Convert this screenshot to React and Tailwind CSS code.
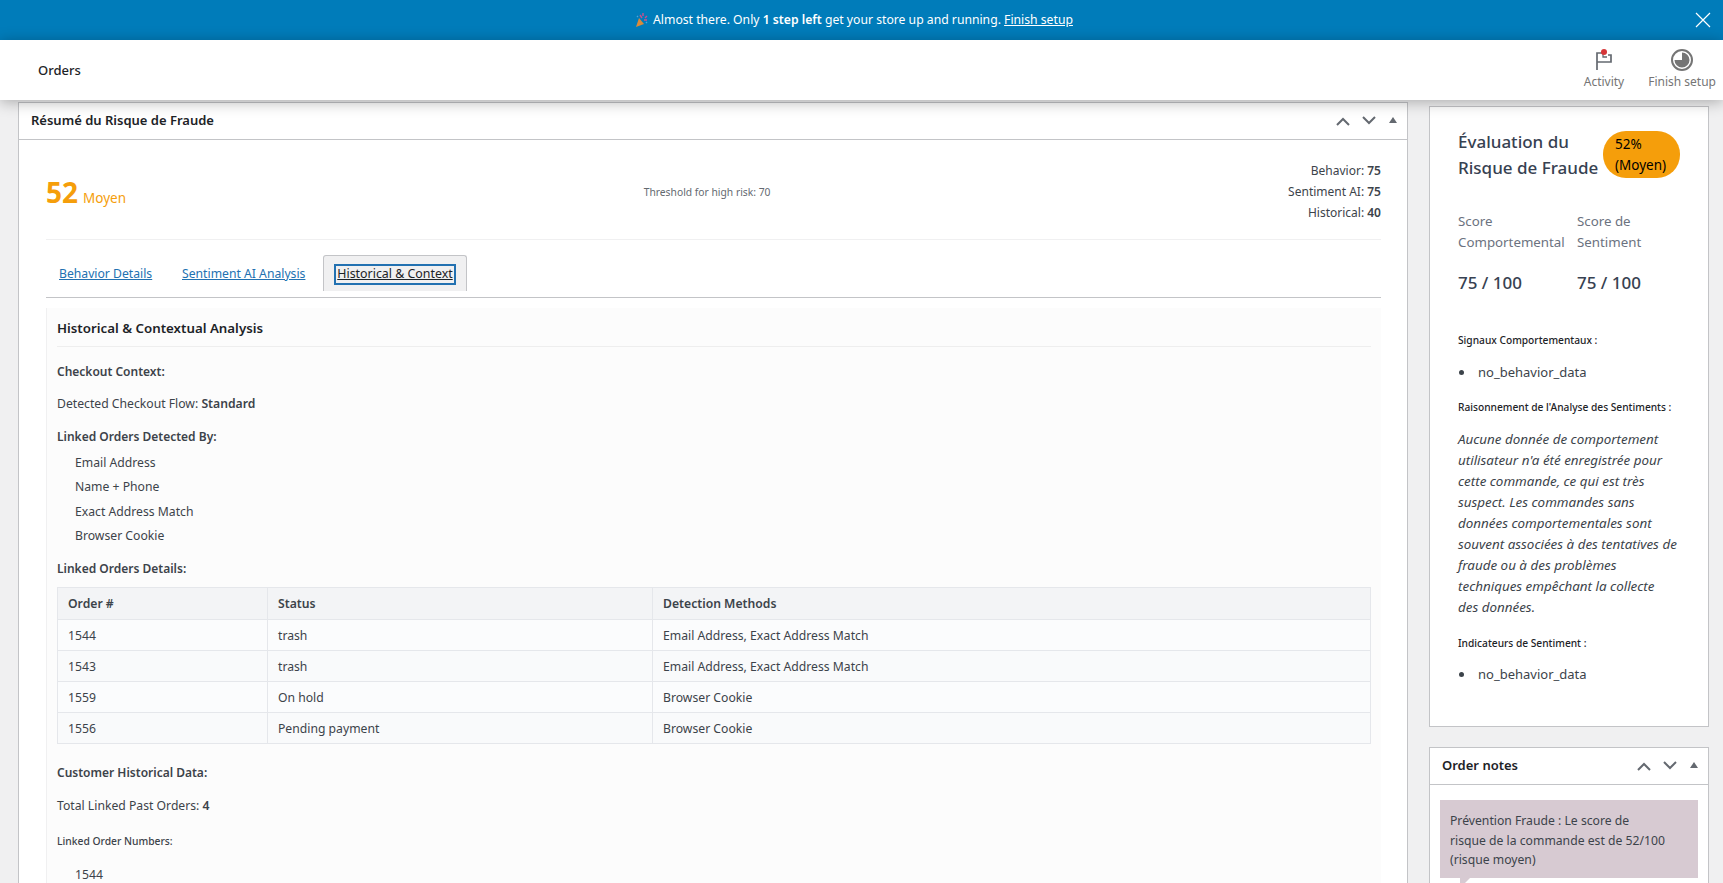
const linkedOrders = [
  ['1544', 'trash', 'Email Address, Exact Address Match', 'bg-[#fbfcfd]'],
  ['1543', 'trash', 'Email Address, Exact Address Match', 'bg-[#f9fafb]'],
  ['1559', 'On hold', 'Browser Cookie', 'bg-[#fbfcfd]'],
  ['1556', 'Pending payment', 'Browser Cookie', 'bg-[#f9fafb]'],
]

const reasoning = [
  'Aucune donnée de comportement',
  "utilisateur n'a été enregistrée pour",
  'cette commande, ce qui est très',
  'suspect. Les commandes sans',
  'données comportementales sont',
  'souvent associées à des tentatives de',
  'fraude ou à des problèmes',
  'techniques empêchant la collecte',
  'des données.',
]

function BoxControls() {
  return (
    <div className="flex items-center gap-[10px] text-[#646970]">
      <svg width="16" height="10" viewBox="0 0 16 10" fill="none" stroke="currentColor" strokeWidth="2">
        <path d="M2 9l6-6 6 6" />
      </svg>
      <svg width="16" height="10" viewBox="0 0 16 10" fill="none" stroke="currentColor" strokeWidth="2">
        <path d="M2 1l6 6 6-6" />
      </svg>
      <svg width="8" height="6" viewBox="0 0 8 6" fill="currentColor" className="ml-[2px] mb-[3px]">
        <path d="M4 0l4 6H0z" />
      </svg>
    </div>
  )
}

function BehaviorList({ children }) {
  return (
    <div className="flex items-center text-[13px] leading-[21px]">
      <span className="w-[5px] h-[5px] rounded-full bg-[#3c434a] mr-[14px] ml-px" />
      {children}
    </div>
  )
}

export default function App() {
  return (
    <div className="h-screen overflow-hidden flex flex-col bg-[#f0f0f1] text-[#3c434a] text-[12.2px] font-['Noto_Sans',sans-serif]">
      <div className="h-10 shrink-0 bg-[#007cba] text-white flex items-center justify-center relative pr-[16px]">
        <svg width="14" height="16" viewBox="0 0 14 16" className="mr-[5px]">
          <path d="M2 15l3-9 5 6z" fill="#d98a3a" />
          <path d="M6 3l2 3M9 1v3M11 6l2-2M10 8h3" stroke="#c9508e" strokeWidth="1.4" fill="none" />
          <path d="M3 4l1 1M12 10l1 1" stroke="#4aa3df" strokeWidth="1.4" />
        </svg>
        <span>
          Almost there. Only <b className="font-semibold">1 step left</b> get your store up and running.{' '}
          <a className="underline">Finish setup</a>
        </span>
        <svg width="16" height="16" viewBox="0 0 16 16" fill="none" stroke="white" strokeWidth="1.2" className="absolute right-[12px] top-[12px]">
          <path d="M1 1l14 14M15 1L1 15" />
        </svg>
      </div>

      <div className="h-[60px] shrink-0 bg-white relative z-10 shadow-[0_2px_14px_rgba(0,0,0,0.3)] flex items-center justify-between pl-[38px] pr-[7px]">
        <span className="text-[#1d2327] font-medium text-[13px] pt-[2px]">Orders</span>
        <div className="flex items-start gap-[24px] text-[#757575] text-[12px]">
          <div className="flex flex-col items-center">
            <svg width="20" height="22" viewBox="0 0 20 22" fill="none" className="mb-[2px]">
              <path d="M3 21V4h6M3 13h14V6h-3" stroke="#646970" strokeWidth="1.7" />
              <path d="M9 4v4h4" stroke="#646970" strokeWidth="1.3" />
              <circle cx="10" cy="3" r="3" fill="#d63638" />
            </svg>
            <span>Activity</span>
          </div>
          <div className="flex flex-col items-center">
            <svg width="22" height="22" viewBox="0 0 22 22" className="mb-[2px]">
              <circle cx="11" cy="11" r="10" fill="none" stroke="#757575" strokeWidth="2" />
              <path d="M11 3.500a7.500 7.500 0 1 1-7.500 7.500H11z" fill="#757575" />
            </svg>
            <span>Finish setup</span>
          </div>
        </div>
      </div>

      <div className="flex items-start pl-[18px] pr-[14px]">
        <div className="w-[1390px] mt-[2px] shrink-0 border border-[#c3c4c7] bg-white">
          <div className="h-[37px] border-b border-[#c3c4c7] flex items-center justify-between pl-3 pr-[10px]">
            <h2 className="text-[13px] font-semibold text-[#1d2327]">Résumé du Risque de Fraude</h2>
            <BoxControls />
          </div>
          <div className="px-[27px] pr-[26px]">
            <div className="pt-[20px] pb-[16px] border-b border-[#f0f0f1] flex items-center justify-between">
              <div className="text-[#f59e0b] flex items-baseline gap-[5px]">
                <span className="text-[28px] leading-[36px] font-bold">52</span>
                <span className="text-[13.5px]">Moyen</span>
              </div>
              <span className="text-[10.3px] text-[#646970] pt-[2px]">Threshold for high risk: 70</span>
              <div className="text-right leading-[21px] text-[12px]">
                <div>Behavior: <b className="font-semibold">75</b></div>
                <div>Sentiment AI: <b className="font-semibold">75</b></div>
                <div>Historical: <b className="font-semibold">40</b></div>
              </div>
            </div>

            <div className="pt-[15px] pb-[6px] border-b border-[#c3c4c7] flex items-end text-[#2271b1]">
              <a className="h-9 w-[117px] pl-[13px] pt-[2px] flex items-center underline">Behavior Details</a>
              <a className="h-9 w-[160px] pl-[19px] pt-[2px] flex items-center underline">Sentiment AI Analysis</a>
              <div className="h-9 w-[144px] border border-b-0 border-[#c3c4c7] rounded-t-[3px] bg-[#f0f0f1] flex items-center justify-center pt-[2px]">
                <a className="h-[17px] w-[118px] flex items-center justify-center whitespace-nowrap text-[12.4px] text-[#1d2327] underline outline-2 outline-[#2271b1]">Historical &amp; Context</a>
              </div>
            </div>

            <div className="mt-[10px] bg-[#fcfcfc] border-l border-[#f0f0f1] pl-[10px] pr-[10px] pt-[10px] leading-[21px]">
              <h3 className="text-[13.3px] font-semibold text-[#1d2327] pb-[7px] border-b border-[#eeeeee]">Historical &amp; Contextual Analysis</h3>
              <p className="mt-[14px] text-[12px] font-semibold">Checkout Context:</p>
              <p className="mt-[11px]">Detected Checkout Flow: <b className="font-semibold">Standard</b></p>
              <p className="mt-[12px] text-[12px] font-semibold">Linked Orders Detected By:</p>
              <ul className="mt-[4px] pl-[18px] leading-[24.3px]">
                <li>Email Address</li>
                <li>Name + Phone</li>
                <li>Exact Address Match</li>
                <li>Browser Cookie</li>
              </ul>
              <p className="mt-[10px] text-[12px] font-semibold">Linked Orders Details:</p>
              <table className="mt-[8px] w-full table-fixed border-collapse">
                <thead>
                  <tr className="bg-[#f3f4f6] h-[32px] text-left">
                    <th className="w-[210px] border border-[#e5e7eb] px-[10px] font-semibold">Order #</th>
                    <th className="w-[385px] border border-[#e5e7eb] px-[10px] font-semibold">Status</th>
                    <th className="border border-[#e5e7eb] px-[10px] font-semibold">Detection Methods</th>
                  </tr>
                </thead>
                <tbody>
                  {linkedOrders.map(([order, status, methods, bg]) => (
                    <tr key={order} className={`h-[31px] ${bg}`}>
                      <td className="border border-[#e5e7eb] px-[10px]">{order}</td>
                      <td className="border border-[#e5e7eb] px-[10px]">{status}</td>
                      <td className="border border-[#e5e7eb] px-[10px]">{methods}</td>
                    </tr>
                  ))}
                </tbody>
              </table>
              <p className="mt-[18px] text-[12px] font-semibold">Customer Historical Data:</p>
              <p className="mt-[12px]">Total Linked Past Orders: <b className="font-semibold">4</b></p>
              <p className="mt-[17px] text-[10.3px] leading-[16px] font-medium">Linked Order Numbers:</p>
              <p className="mt-[15px] pl-[18px]">1544</p>
            </div>
          </div>
        </div>

        <div className="w-[280px] ml-[21px] shrink-0">
          <div className="mt-[6px] border border-[#c3c4c7] bg-white px-[28px] pt-[22px] pb-[41px]">
            <div className="flex items-start">
              <h2 className="w-[145px] text-[17px] leading-[26px] font-medium text-[#374151]">Évaluation du Risque de Fraude</h2>
              <div className="mt-[2px] w-[77px] h-[47px] shrink-0 rounded-[23px] bg-[#f59e0b] text-black text-[13.5px] leading-[21px] pl-[12px] pt-[3px]">
                52%<br />(Moyen)
              </div>
            </div>
            <div className="mt-[30px] grid grid-cols-[119px_1fr] text-[13.3px] leading-[21px] text-[#6b7280]">
              <span>Score<br />Comportemental</span>
              <span>Score de<br />Sentiment</span>
            </div>
            <div className="mt-[17px] grid grid-cols-[119px_1fr] text-[17px] leading-[26px] font-medium text-[#374151]">
              <span>75 / 100</span>
              <span>75 / 100</span>
            </div>
            <p className="mt-[36px] text-[10.2px] leading-[16px] font-medium text-[#1d2327]">Signaux Comportementaux :</p>
            <div className="mt-[14px]"><BehaviorList>no_behavior_data</BehaviorList></div>
            <p className="mt-[16px] text-[10.2px] leading-[16px] font-medium text-[#1d2327]">Raisonnement de l'Analyse des Sentiments :</p>
            <p className="mt-[14px] italic text-[13.4px] leading-[21px] whitespace-nowrap">
              {reasoning.map((line) => (
                <span key={line} className="block">{line}</span>
              ))}
            </p>
            <p className="mt-[17px] text-[10.2px] leading-[16px] font-medium text-[#1d2327]">Indicateurs de Sentiment :</p>
            <div className="mt-[13px]"><BehaviorList>no_behavior_data</BehaviorList></div>
          </div>

          <div className="mt-[20px] border border-[#c3c4c7] bg-white">
            <div className="h-[37px] border-b border-[#c3c4c7] flex items-center justify-between pl-3 pr-[10px]">
              <h2 className="text-[13px] font-semibold text-[#1d2327]">Order notes</h2>
              <BoxControls />
            </div>
            <div className="px-[10px] pt-[15px] pb-[40px]">
              <div className="relative h-[78px] bg-[#d7cad2] px-[10px] pt-[11px] leading-[19.5px]">
                Prévention Fraude : Le score de<br />
                risque de la commande est de 52/100<br />
                (risque moyen)
                <span className="absolute left-[20px] top-full border-t-[10px] border-t-[#d7cad2] border-r-[10px] border-r-transparent" />
              </div>
            </div>
          </div>
        </div>
      </div>
    </div>
  )
}
